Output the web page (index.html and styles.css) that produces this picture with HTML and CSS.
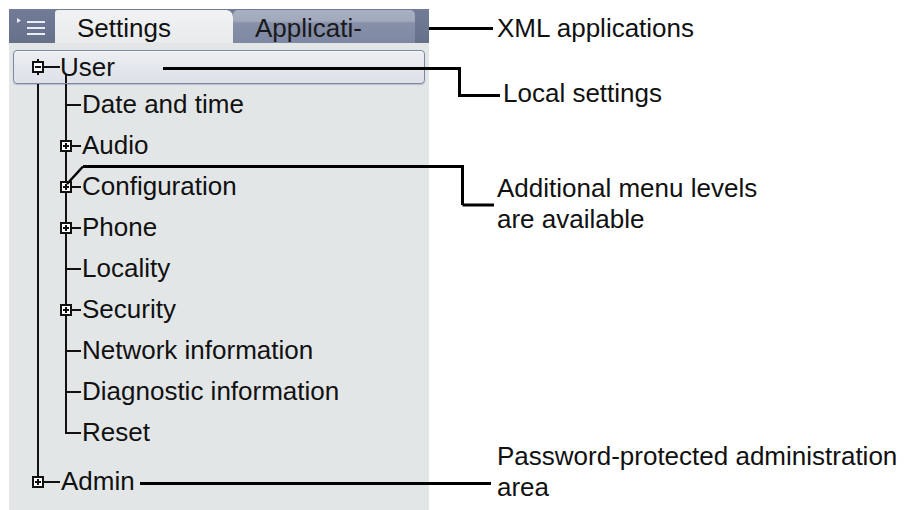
FILE: index.html
```html
<!DOCTYPE html>
<html>
<head>
<meta charset="utf-8">
<title>Settings menu</title>
<link rel="stylesheet" href="styles.css">
</head>
<body>

<div class="page">

  <div class="panel">
    <div class="tabbar">
      <div class="menubtn">
        <svg width="30" height="20" viewBox="0 0 30 20">
          <path d="M0 1 L4 3.5 L0 6 Z" fill="#e9ecf2"/>
          <rect x="10" y="4" width="18" height="2" fill="#e9ecf2"/>
          <rect x="10" y="10" width="18" height="2" fill="#e9ecf2"/>
          <rect x="10" y="16" width="18" height="2" fill="#e9ecf2"/>
        </svg>
      </div>
      <div class="tab tab-active">Settings</div>
      <div class="tab tab-other">Applicati-</div>
    </div>

    <div class="tree">
      <div class="user-row">
        <span class="node minus"></span>
        <span class="label">User</span>
      </div>
      <ul class="sub">
        <li class="item"><span class="node"></span>Date and time</li>
        <li class="item"><span class="node plus"></span>Audio</li>
        <li class="item"><span class="node plus"></span>Configuration</li>
        <li class="item"><span class="node plus"></span>Phone</li>
        <li class="item"><span class="node"></span>Locality</li>
        <li class="item"><span class="node plus"></span>Security</li>
        <li class="item"><span class="node"></span>Network information</li>
        <li class="item"><span class="node"></span>Diagnostic information</li>
        <li class="item last"><span class="node"></span>Reset</li>
      </ul>
      <div class="admin-row">
        <span class="node plus"></span>
        <span class="label">Admin</span>
      </div>
    </div>
  </div>

  <div class="notes">
    <div class="note note-xml">XML applications</div>
    <div class="note note-local">Local settings</div>
    <div class="note note-levels">Additional menu levels<br>are available</div>
    <div class="note note-admin">Password-protected administration<br>area</div>
  </div>

  <!-- callout lines -->
  <svg class="callouts" width="904" height="510" viewBox="0 0 904 510">
    <g fill="none" stroke="#000" stroke-width="3">
      <path d="M429 28.5 H493"/>
      <path d="M163 68.5 H459.5 V95.5 H500"/>
      <path d="M462.5 205 V166.5 H83"/>
      <path d="M462.5 205 H494"/>
      <path d="M140 483.5 H491"/>
    </g>
    <path d="M83 166.5 L67 184" stroke="#000" stroke-width="2.5"/>
  </svg>

</div>

</body>
</html>
```

FILE: styles.css
```css
body {
  margin: 0;
  background: #ffffff;
  font-family: "Liberation Sans", Arial, Helvetica, sans-serif;
  font-size: 26px;
  color: #111111;
  overflow: hidden;
}

.page {
  position: relative;
  display: flex;
  width: 904px;
  height: 510px;
}

.panel {
  margin: 9px 0 0 9px;
  width: 420px;
  height: 501px;
  background: #e3e6e7;
  flex-shrink: 0;
}

/* tab bar */

.tabbar {
  display: flex;
  height: 34px;
  background: linear-gradient(#737c97, #667089);
}

.menubtn {
  width: 46px;
  display: flex;
  align-items: flex-start;
  padding: 8px 0 0 8px;
  box-sizing: border-box;
}

.tab {
  margin-top: 1px;
  padding: 4px 0 0 22px;
  box-sizing: border-box;
  line-height: 29px;
}

.tab-active {
  width: 178px;
  background: linear-gradient(#f1f2f3, #e8eaec);
  border-radius: 3px 7px 0 0;
}

.tab-other {
  width: 182px;
  background: linear-gradient(#a9b0c3 0, #a1a9bd 11px, #8790a9 13px, #7e88a2 100%);
  border-radius: 5px 5px 0 0;
  color: #1a1a1a;
}

/* tree */

.tree {
  padding-top: 7px;
}

.node {
  width: 12px;
  height: 12px;
  box-sizing: border-box;
  flex-shrink: 0;
}

.plus, .minus {
  border: 2px solid #111;
  background: #fff;
}

.plus {
  background:
    linear-gradient(#111, #111) center / 6px 2px no-repeat,
    linear-gradient(#111, #111) center / 2px 6px no-repeat,
    #fff;
}

.minus {
  background:
    linear-gradient(#111, #111) center / 6px 2px no-repeat,
    #fff;
}

.user-row {
  display: flex;
  align-items: center;
  height: 34px;
  margin: 0 4px 0 4px;
  padding-left: 18px;
  box-sizing: border-box;
  border: 1px solid #7e88a6;
  border-radius: 4px;
  box-shadow: inset 0 1px 0 #f6f7f9, 0 1px 1px #b8bec9;
  background:
    linear-gradient(#111, #111) 23px 50% / 2px 50% no-repeat,
    linear-gradient(#111, #111) 51px 100% / 2px 9px no-repeat,
    linear-gradient(#111, #111) 30px 50% / 16px 2px no-repeat,
    linear-gradient(#eceef2, #dde1e8);
}

.user-row .label {
  margin-left: 16px;
}

.sub {
  list-style: none;
  margin: 0;
  padding: 0 0 8px 0;
  background: linear-gradient(#111, #111) 28px 0 / 2px 100% no-repeat;
}

.item {
  display: flex;
  align-items: center;
  height: 41px;
  padding-left: 51px;
  background:
    linear-gradient(#111, #111) 28px 0 / 2px 100% no-repeat,
    linear-gradient(#111, #111) 56px 0 / 2px 100% no-repeat,
    linear-gradient(#111, #111) 58px 50% / 14px 2px no-repeat;
}

.item.last {
  background:
    linear-gradient(#111, #111) 28px 0 / 2px 100% no-repeat,
    linear-gradient(#111, #111) 56px 0 / 2px 21px no-repeat,
    linear-gradient(#111, #111) 56px 50% / 16px 2px no-repeat;
}

.item .node {
  margin-right: 10px;
}

.admin-row {
  display: flex;
  align-items: center;
  height: 41px;
  padding-left: 23px;
  background:
    linear-gradient(#111, #111) 28px 0 / 2px 50% no-repeat,
    linear-gradient(#111, #111) 35px 50% / 16px 2px no-repeat;
}

.admin-row .label {
  margin-left: 17px;
}

/* annotations */

.notes {
  margin-left: 68px;
  display: flex;
  flex-direction: column;
  line-height: 31px;
  white-space: nowrap;
}

.note-xml {
  margin-top: 13px;
}

.note-local {
  margin: 34px 0 0 6px;
}

.note-levels {
  margin-top: 64px;
}

.note-admin {
  margin-top: 206px;
}

.callouts {
  position: absolute;
  top: 0;
  left: 0;
  pointer-events: none;
}
```
